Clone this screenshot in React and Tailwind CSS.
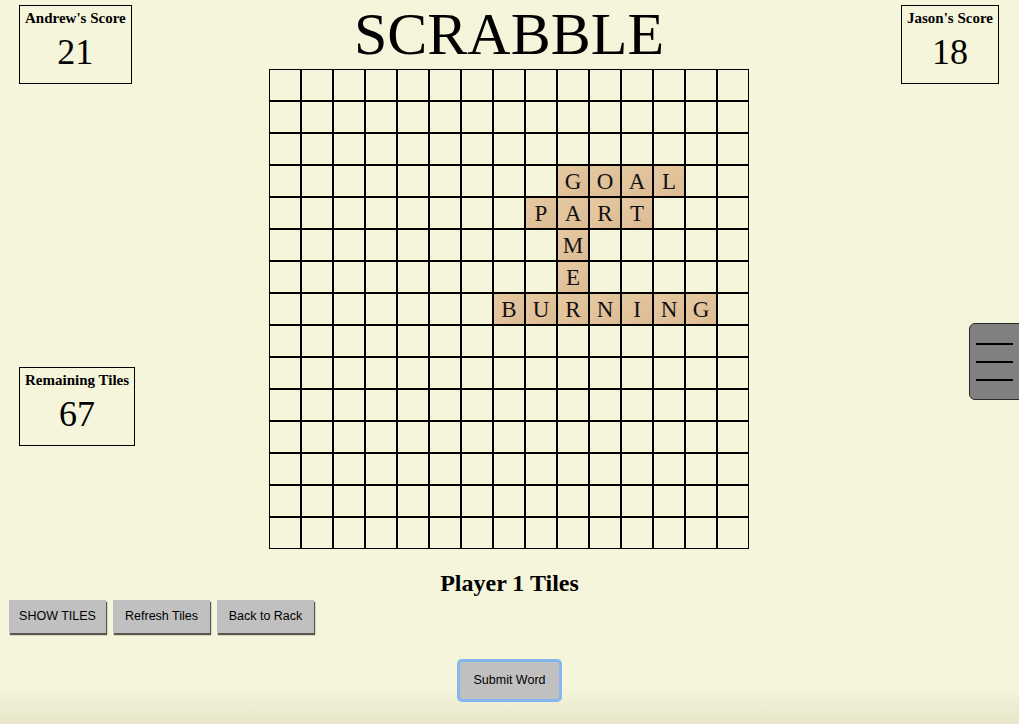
import React from "react";

const SERIF = "font-['Liberation_Serif','Times_New_Roman',serif]";
const SANS = "font-['Liberation_Sans',Arial,sans-serif]";

const TILES = {
  "3-9": "G", "3-10": "O", "3-11": "A", "3-12": "L",
  "4-8": "P", "4-9": "A", "4-10": "R", "4-11": "T",
  "5-9": "M",
  "6-9": "E",
  "7-7": "B", "7-8": "U", "7-9": "R", "7-10": "N", "7-11": "I", "7-12": "N", "7-13": "G",
};

function ScoreBox({ title, value }) {
  return (
    <div className="border border-black px-[5px] pt-[4px] pb-[10px] text-center text-black">
      <div className="text-[15px] font-bold leading-[17px] whitespace-nowrap">{title}</div>
      <div className="text-[36px] leading-[41px] mt-[5px]">{value}</div>
    </div>
  );
}

function Board() {
  const cells = [];
  for (let r = 0; r < 15; r++) {
    for (let c = 0; c < 15; c++) {
      const letter = TILES[`${r}-${c}`];
      cells.push(
        <div key={`${r}-${c}`} className="w-8 h-8 border border-black flex">
          {letter && (
            <div className="flex-1 flex items-center justify-center bg-[linear-gradient(135deg,#e6c9a3,#dcbb92)] text-[23px] leading-none text-[#111] pt-[1px]">
              {letter}
            </div>
          )}
        </div>
      );
    }
  }
  return <div className="grid grid-cols-[repeat(15,32px)] w-[480px]">{cells}</div>;
}

function GrayButton({ children, className = "" }) {
  return (
    <button
      className={`${SANS} bg-[#c0c0c0] text-black text-[12.5px] flex items-center justify-center shadow-[1px_2px_1px_rgba(0,0,0,0.65)] ${className}`}
    >
      {children}
    </button>
  );
}

export default function App() {
  return (
    <div
      className={`${SERIF} relative min-h-[724px] w-full overflow-hidden bg-[linear-gradient(to_bottom,#f5f5dc_0px,#f5f5dc_688px,#e7e5ca_724px)] text-black`}
    >
      <div className="grid grid-cols-[269px_480px_1fr]">
        <div className="flex flex-col items-start pl-[19px] pt-[5px]">
          <ScoreBox title="Andrew's Score" value="21" />
          <div className="mt-[283px]">
            <ScoreBox title="Remaining Tiles" value="67" />
          </div>
        </div>
        <div className="flex flex-col items-center">
          <h1 className="text-[60px] leading-[69px] font-normal whitespace-nowrap">SCRABBLE</h1>
          <Board />
        </div>
        <div className="flex justify-end items-start pr-[20px] pt-[5px]">
          <ScoreBox title="Jason's Score" value="18" />
        </div>
      </div>

      <h2 className="text-center text-[24px] font-bold leading-[28px] mt-[20px]">Player 1 Tiles</h2>

      <div className="flex gap-[7px] pl-[9px] mt-[3px]">
        <GrayButton className="w-[97px] h-[33px]">SHOW TILES</GrayButton>
        <GrayButton className="w-[97px] h-[33px]">Refresh Tiles</GrayButton>
        <GrayButton className="w-[97px] h-[33px]">Back to Rack</GrayButton>
      </div>

      <div className="flex justify-center mt-[29px]">
        <GrayButton className="w-[99px] h-[37px] rounded-[2px] ring-[3px] ring-[#86b6f0]">Submit Word</GrayButton>
      </div>

      <button className="absolute left-[969px] top-[323px] w-[60px] h-[77px] bg-[#808080] border border-[#2a2a2a] rounded-[6px] flex flex-col gap-[16px] pt-[19px] pl-[6px]">
        <span className="block w-[37px] h-[2px] bg-black" />
        <span className="block w-[37px] h-[2px] bg-black" />
        <span className="block w-[37px] h-[2px] bg-black" />
      </button>
    </div>
  );
}
